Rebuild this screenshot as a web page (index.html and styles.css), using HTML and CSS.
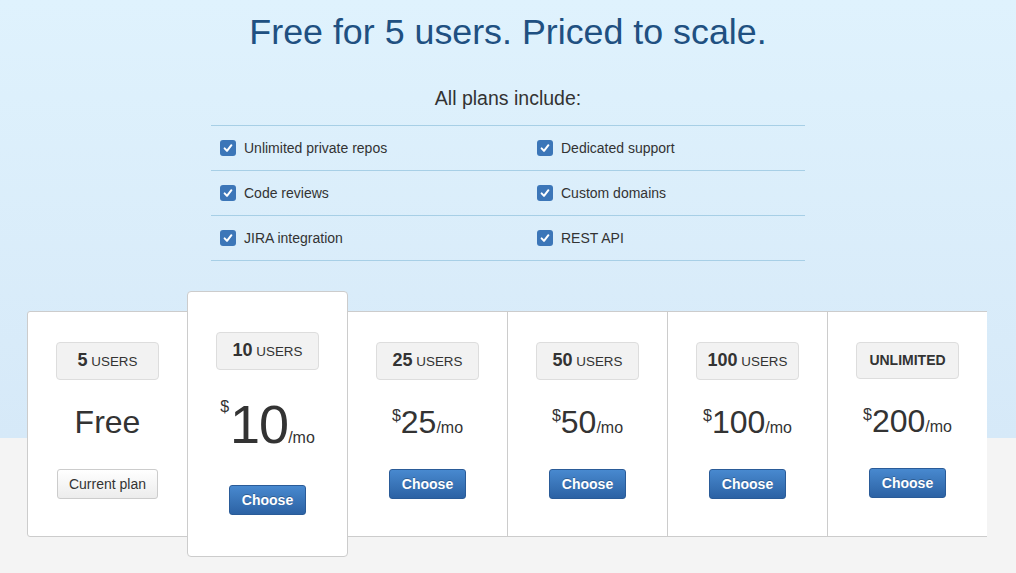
FILE: index.html
```html
<!DOCTYPE html>
<html lang="en">
<head>
<meta charset="utf-8">
<title>Pricing</title>
<link rel="stylesheet" href="styles.css">
</head>
<body>
<div class="page">
  <header class="hero">
    <h1 class="title">Free for 5 users. Priced to scale.</h1>
    <h2 class="subtitle">All plans include:</h2>
    <ul class="features">
      <li class="feature"><svg class="check" viewBox="0 0 16 16" width="16" height="16"><rect width="16" height="16" rx="3" fill="#3c76b8"/><path d="M4.6 8.4 L7 10.9 L11.4 5.2" fill="none" stroke="#fff" stroke-width="2" stroke-linecap="round" stroke-linejoin="round"/></svg><span>Unlimited private repos</span></li>
      <li class="feature"><svg class="check" viewBox="0 0 16 16" width="16" height="16"><rect width="16" height="16" rx="3" fill="#3c76b8"/><path d="M4.6 8.4 L7 10.9 L11.4 5.2" fill="none" stroke="#fff" stroke-width="2" stroke-linecap="round" stroke-linejoin="round"/></svg><span>Dedicated support</span></li>
      <li class="feature"><svg class="check" viewBox="0 0 16 16" width="16" height="16"><rect width="16" height="16" rx="3" fill="#3c76b8"/><path d="M4.6 8.4 L7 10.9 L11.4 5.2" fill="none" stroke="#fff" stroke-width="2" stroke-linecap="round" stroke-linejoin="round"/></svg><span>Code reviews</span></li>
      <li class="feature"><svg class="check" viewBox="0 0 16 16" width="16" height="16"><rect width="16" height="16" rx="3" fill="#3c76b8"/><path d="M4.6 8.4 L7 10.9 L11.4 5.2" fill="none" stroke="#fff" stroke-width="2" stroke-linecap="round" stroke-linejoin="round"/></svg><span>Custom domains</span></li>
      <li class="feature"><svg class="check" viewBox="0 0 16 16" width="16" height="16"><rect width="16" height="16" rx="3" fill="#3c76b8"/><path d="M4.6 8.4 L7 10.9 L11.4 5.2" fill="none" stroke="#fff" stroke-width="2" stroke-linecap="round" stroke-linejoin="round"/></svg><span>JIRA integration</span></li>
      <li class="feature"><svg class="check" viewBox="0 0 16 16" width="16" height="16"><rect width="16" height="16" rx="3" fill="#3c76b8"/><path d="M4.6 8.4 L7 10.9 L11.4 5.2" fill="none" stroke="#fff" stroke-width="2" stroke-linecap="round" stroke-linejoin="round"/></svg><span>REST API</span></li>
    </ul>
  </header>

  <section class="plans">
    <div class="plan plan-first">
      <div class="badge"><b>5</b> USERS</div>
      <div class="price">Free</div>
      <button class="btn btn-default">Current plan</button>
    </div>
    <div class="plan plan-featured">
      <div class="badge"><b>10</b> USERS</div>
      <div class="price price-lg"><span class="cur">$</span><span class="amt">10</span><span class="per">/mo</span></div>
      <button class="btn btn-primary">Choose</button>
    </div>
    <div class="plan">
      <div class="badge"><b>25</b> USERS</div>
      <div class="price"><span class="cur">$</span>25<span class="per">/mo</span></div>
      <button class="btn btn-primary">Choose</button>
    </div>
    <div class="plan">
      <div class="badge"><b>50</b> USERS</div>
      <div class="price"><span class="cur">$</span>50<span class="per">/mo</span></div>
      <button class="btn btn-primary">Choose</button>
    </div>
    <div class="plan">
      <div class="badge"><b>100</b> USERS</div>
      <div class="price"><span class="cur">$</span>100<span class="per">/mo</span></div>
      <button class="btn btn-primary">Choose</button>
    </div>
    <div class="plan plan-last">
      <div class="badge badge-text"><b>UNLIMITED</b></div>
      <div class="price"><span class="cur">$</span>200<span class="per">/mo</span></div>
      <button class="btn btn-primary">Choose</button>
    </div>
  </section>
</div>
</body>
</html>
```

FILE: styles.css
```css
* { box-sizing: border-box; }

html, body {
  margin: 0;
  padding: 0;
}

body {
  font-family: "Liberation Sans", Arial, sans-serif;
  color: #333;
  background: #f4f4f4;
}

.page {
  min-height: 573px;
  background: linear-gradient(to bottom, #dff2fd 0, #d6e9f8 438px, #f4f4f4 438px, #f4f4f4 100%);
}

.hero {
  display: flex;
  flex-direction: column;
  align-items: center;
}

.title {
  margin: 0;
  padding-top: 12px;
  font-size: 35.8px;
  line-height: 41px;
  font-weight: normal;
  color: #205081;
  text-align: center;
}

.subtitle {
  margin: 33px 0 0;
  font-size: 19.5px;
  line-height: 24px;
  font-weight: normal;
  color: #333;
}

.features {
  list-style: none;
  margin: 15px 0 0;
  padding: 0;
  display: grid;
  grid-template-columns: 317px 277px;
  border-top: 1px solid #a7cfe6;
}

.feature {
  display: flex;
  align-items: center;
  gap: 8px;
  height: 45px;
  padding-left: 9px;
  padding-bottom: 1px;
  border-bottom: 1px solid #a7cfe6;
  font-size: 14px;
  color: #333;
}

.check {
  display: block;
  flex: none;
}

.plans {
  display: flex;
  align-items: center;
  padding-left: 27px;
  margin-top: 30px;
}

.plan {
  width: 161px;
  min-height: 226px;
  margin-left: -1px;
  padding: 30px 0 37px;
  display: flex;
  flex-direction: column;
  align-items: center;
  background: #fff;
  border: 1px solid #cccccc;
}

.plan-first {
  margin-left: 0;
  border-radius: 3px 0 0 3px;
}

.plan-last {
  width: 160px;
  border-right: 0;
}

.plan-featured {
  position: relative;
  z-index: 1;
  min-height: 266px;
  padding: 40px 0 41px;
  border-radius: 4px;
}

.badge {
  width: 103px;
  padding: 7px 0;
  text-align: center;
  font-size: 13.4px;
  line-height: 20px;
  color: #333;
  background: #f2f2f2;
  border: 1px solid #dddddd;
  border-radius: 4px;
}

.badge b {
  font-size: 18px;
  font-weight: bold;
}

.badge-text b {
  font-size: 14px;
}

.price {
  margin: 22px 0 27px;
  font-size: 32px;
  line-height: 40px;
  color: #333;
  white-space: nowrap;
}

.price .cur {
  font-size: 16px;
  line-height: 1;
  vertical-align: 12px;
}

.price .per {
  font-size: 16px;
  line-height: 1;
}

.price-lg {
  margin: 22px 0 29px;
  font-size: 54px;
  line-height: 64px;
}

.price-lg .amt {
  letter-spacing: -1px;
}

.price-lg .cur {
  vertical-align: 31px;
  margin-right: 1px;
}

.btn {
  font-family: "Liberation Sans", Arial, sans-serif;
  font-size: 14px;
  line-height: 20px;
  padding: 4px 11px;
  border-radius: 3px;
  cursor: pointer;
}

.btn-default {
  color: #333;
  background: linear-gradient(to bottom, #ffffff, #ececec);
  border: 1px solid #cccccc;
}

.btn-primary {
  color: #fff;
  font-weight: bold;
  padding: 4px 12px;
  background: linear-gradient(to bottom, #4889cf, #2c62a4);
  border: 1px solid #2a5b98;
  text-shadow: 0 -1px 0 rgba(0, 0, 0, 0.25);
}
```
